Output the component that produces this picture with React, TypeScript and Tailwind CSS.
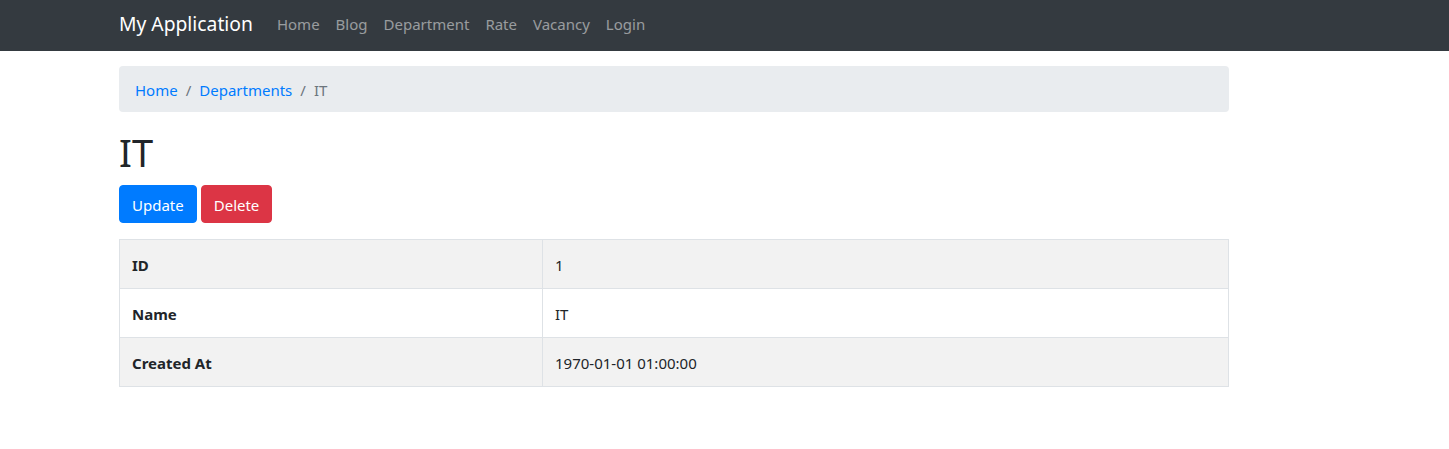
export default function App() {
  const font = { fontFamily: '"Noto Sans", "Open Sans", sans-serif' };
  const rows = [
    ["ID", "1"],
    ["Name", "IT"],
    ["Created At", "1970-01-01 01:00:00"],
  ];
  return (
    <div className="min-h-[449px] bg-white text-[15px] text-[#212529]" style={font}>
      <nav className="h-[51px] bg-[#343a40] flex items-center">
        <div className="ml-[119px] flex items-center -mt-[3px]">
          <a className="text-[19.3px] leading-[30px] text-white mr-[16px]">My Application</a>
          <ul className="flex">
            {["Home", "Blog", "Department", "Rate", "Vacancy", "Login"].map((l) => (
              <li key={l}>
                <a className="block px-[8px] leading-[24px] text-[rgba(255,255,255,0.5)]">{l}</a>
              </li>
            ))}
          </ul>
        </div>
      </nav>
      <main className="ml-[119px] w-[1110px] pt-[15px]">
        <ol className="flex items-center bg-[#e9ecef] rounded-[4px] px-[16px] pt-[12px] pb-[10px] mb-[16px] leading-[24px]">
          <li><a className="text-[#007bff]">Home</a></li>
          <li className="px-[8px] text-[#6c757d]">/</li>
          <li><a className="text-[#007bff]">Departments</a></li>
          <li className="px-[8px] text-[#6c757d]">/</li>
          <li className="text-[#6c757d]">IT</li>
        </ol>
        <h1 className="text-[38px] leading-[48px] font-normal mb-[9px]">IT</h1>
        <p className="flex gap-[4px] mb-[16px]">
          <a className="inline-block bg-[#007bff] text-white rounded-[4px] px-[12px] pt-[7px] pb-[5px] leading-[24px] border border-[#007bff]">Update</a>
          <a className="inline-block bg-[#dc3545] text-white rounded-[4px] px-[12px] pt-[7px] pb-[5px] leading-[24px] border border-[#dc3545]">Delete</a>
        </p>
        <table className="w-full border-collapse border border-[#dee2e6]">
          <tbody>
            {rows.map(([k, v], i) => (
              <tr key={k} className={i % 2 === 0 ? "bg-[#f2f2f2]" : "bg-white"}>
                <th className="w-[423px] text-left font-bold pt-[13px] pb-[11px] px-[12px] leading-[24px] border border-[#dee2e6]">{k}</th>
                <td className="pt-[13px] pb-[11px] px-[12px] leading-[24px] border border-[#dee2e6]">{v}</td>
              </tr>
            ))}
          </tbody>
        </table>
      </main>
    </div>
  );
}
